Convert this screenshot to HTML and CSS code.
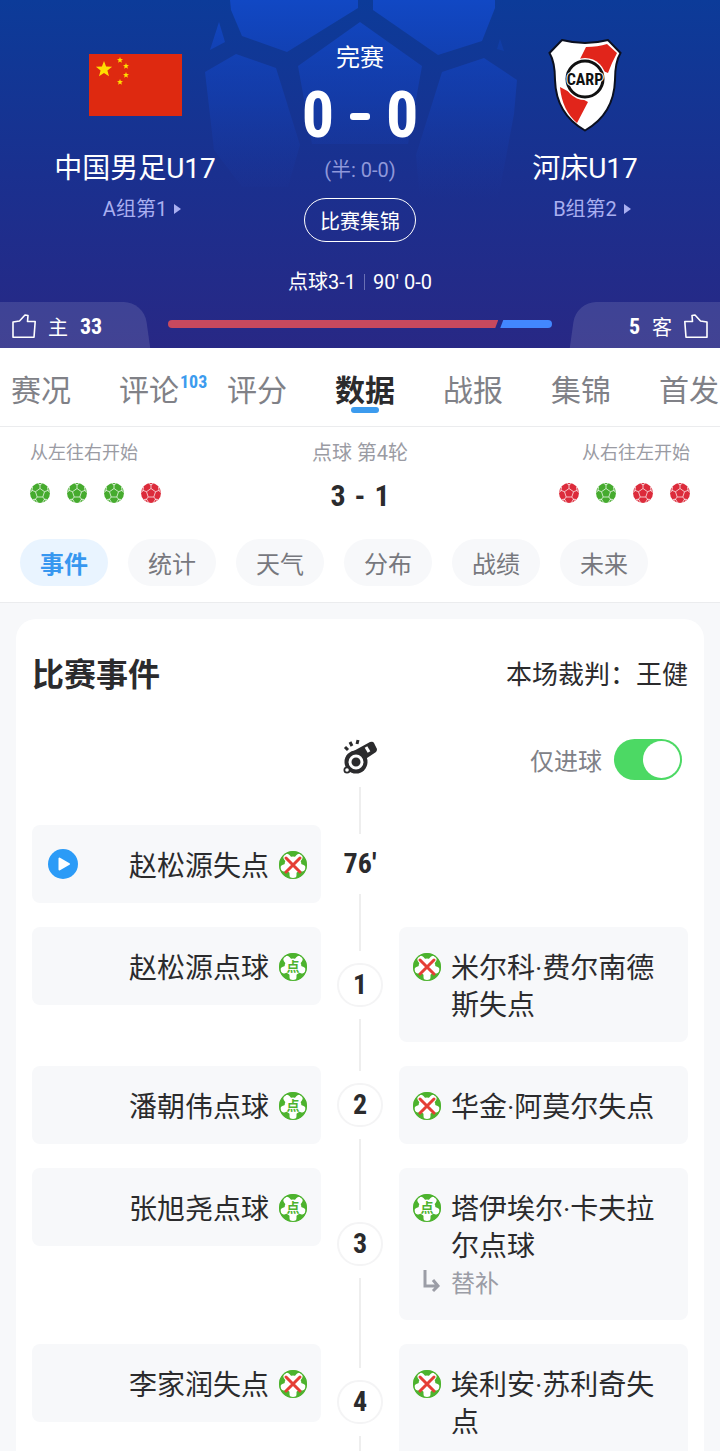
FILE: index.html
```
<!DOCTYPE html>
<html lang="zh-CN">

<head>
    <meta charset="UTF-8" />
    <meta name="viewport" content="width=device-width, initial-scale=1.0" />
    <title>中国男足U17 - 河床U17</title>
    <link rel="stylesheet" href="styles.css">
</head>

<body>
    <!-- shared icons -->
    <svg class="sprite" aria-hidden="true">
        <symbol id="ball" viewBox="0 0 20 20">
            <circle cx="10" cy="10" r="10" fill="currentColor" />
            <g fill="none" stroke="#fff" stroke-opacity=".7">
                <path d="M10 5.500l4.500 3.200-1.700 5.300H7.200L5.500 8.700z" />
                <path d="M10 5.500V1M14.500 8.700l4-1.500M12.800 14l2.700 3.500M7.200 14l-2.700 3.500M5.500 8.700l-4-1.500" />
                <path d="M8 .5l2 1.500 2-1.500M17.500 4l.5 3.500 1.500 2M17 16.500l-2.500-.3-2 3.300M7.500 19.500l-2-3.300-2.500.3M.5 9.500L2 7.500 2.500 4" />
            </g>
        </symbol>
        <symbol id="goal" viewBox="0 0 28 28">
            <circle cx="14" cy="14" r="14" fill="#4db32e" />
            <path d="M14 14L8 6.500M14 14l6-7.500M14 14l9 3M14 14L5 17M14 14v10" stroke="#fff" stroke-width="7" stroke-linecap="round" />
            <circle cx="14" cy="14" r="8.500" fill="#fff" />
            <circle cx="14" cy="14" r="13.500" fill="none" stroke="#4db32e" />
        </symbol>
        <symbol id="scored" viewBox="0 0 28 28">
            <use href="#goal" />
            <text x="14" y="18" text-anchor="middle" font-size="13" font-weight="700" fill="#4db32e">点</text>
        </symbol>
        <symbol id="missed" viewBox="0 0 28 28">
            <use href="#goal" />
            <path d="M7 7l14 14M21 7L7 21" stroke="#e53e35" stroke-width="3" stroke-linecap="round" />
        </symbol>
        <symbol id="thumb" viewBox="0 0 24 24">
            <path d="M1 8l6.500-1L13 1l3 .5L15.500 7.500H23.200L22 23.200H1z" fill="none" stroke="currentColor" stroke-width="1.600" stroke-linejoin="round" />
        </symbol>
    </svg>

    <header class="hero">
        <svg class="hero-ball" viewBox="0 0 340 240" aria-hidden="true">
            <defs>
                <linearGradient id="fade" gradientUnits="userSpaceOnUse" x1="0" y1="0" x2="0" y2="200">
                    <stop offset="0" stop-color="#1148c4" />
                    <stop offset=".5" stop-color="#143fb4" stop-opacity=".6" />
                    <stop offset="1" stop-color="#1a38a0" stop-opacity="0" />
                </linearGradient>
            </defs>
            <g fill="url(#fade)">
                <path d="M40 0h128v8L97 52 52 36 41 10z" />
                <path d="M183 0h122v8l-13 33-44 14L183 10z" />
                <path d="M170 22l62 44-14 78h-96l-14-78z" />
                <path d="M15 72l31-18 40 14 24 77-12 42H52L24 150z" />
                <path d="M252 72l42-14 33 22-3 34-16 86h-78l-4-45z" />
                <path d="M29 22l-9 28 15-8z" />
                <path d="M310 39l4 12-7-2z" opacity=".5" />
            </g>
        </svg>

        <div class="match">
            <div class="team">
                <div class="logo">
                    <svg width="93" height="62" viewBox="0 0 93 62" role="img" aria-label="中国">
                        <path d="M0 0h93v62H0z" fill="#de2910" />
                        <g fill="#ffde00">
                            <path d="M15 7l2.100 5.500 6 .3-4.700 3.800 1.600 5.700-5-3.200-5 3.200 1.600-5.700-4.700-3.800 6-.3z" />
                            <path id="star" d="M31 3l.8 2.100 2.200.1-1.700 1.400.6 2.200-1.900-1.200-1.900 1.200.6-2.200L28 5.200l2.200-.1z" />
                            <use href="#star" x="6" y="6" />
                            <use href="#star" x="6" y="15" />
                            <use href="#star" y="22" />
                        </g>
                    </svg>
                </div>
                <div class="team-name">中国男足U17</div>
                <a class="rank" href="#">A组第1 <svg width="7" height="12" viewBox="0 0 7 12"><path d="M0 1l7 5-7 5z" fill="currentColor" /></svg></a>
            </div>

            <div class="result">
                <div class="status">完赛</div>
                <div class="score"><span>0</span><i></i><span>0</span></div>
                <div class="half">(半: 0-0)</div>
                <button class="highlights">比赛集锦</button>
            </div>

            <div class="team">
                <div class="logo">
                    <svg width="74" height="94" viewBox="0 0 74 94" role="img" aria-label="CARP">
                        <path d="M14 2q23 6 46 0l12.500 13Q67 24 67 42 66 76 37 92.500 8 76 7 42 7 24 1.500 15z" fill="#fff" stroke="#0b1020" stroke-width="2" />
                        <path d="M38 9q12 0 21-3l10 9q-5 9-9 20L31 23zM12 49l28 15-11 21Q14 72 12 49z" fill="#e1251b" />
                        <circle cx="37" cy="41" r="21" fill="#fff" />
                        <circle cx="37" cy="41" r="18" fill="none" stroke="#111" stroke-width="3" />
                        <text class="monogram" x="37" y="47" text-anchor="middle">CARP</text>
                    </svg>
                </div>
                <div class="team-name">河床U17</div>
                <a class="rank" href="#">B组第2 <svg width="7" height="12" viewBox="0 0 7 12"><path d="M0 1l7 5-7 5z" fill="currentColor" /></svg></a>
            </div>
        </div>

        <div class="extra"><span>点球3-1</span><span>90' 0-0</span></div>

        <div class="support">
            <button class="vote home">
                <svg width="24" height="24"><use href="#thumb" /></svg>
                <span>主</span><b>33</b>
            </button>
            <div class="ratio">
                <div class="ratio-home" style="width: 86%"></div>
                <div class="ratio-away"></div>
            </div>
            <button class="vote away">
                <b>5</b><span>客</span>
                <svg class="flip" width="24" height="24"><use href="#thumb" /></svg>
            </button>
        </div>
    </header>

    <nav class="tabs">
        <a href="#">赛况</a>
        <a href="#">评论<sup>103</sup></a>
        <a href="#">评分</a>
        <a href="#" class="active">数据</a>
        <a href="#">战报</a>
        <a href="#">集锦</a>
        <a href="#">首发</a>
    </nav>

    <section class="shootout">
        <div class="side">
            <div class="side-label">从左往右开始</div>
            <div class="balls">
                <svg class="in"><use href="#ball" /></svg>
                <svg class="in"><use href="#ball" /></svg>
                <svg class="in"><use href="#ball" /></svg>
                <svg class="out"><use href="#ball" /></svg>
            </div>
        </div>
        <div class="round">
            <div class="round-label">点球 第4轮</div>
            <div class="round-score"><span>3</span><span>-</span><span>1</span></div>
        </div>
        <div class="side right">
            <div class="side-label">从右往左开始</div>
            <div class="balls">
                <svg class="out"><use href="#ball" /></svg>
                <svg class="in"><use href="#ball" /></svg>
                <svg class="out"><use href="#ball" /></svg>
                <svg class="out"><use href="#ball" /></svg>
            </div>
        </div>
    </section>

    <div class="chips">
        <button class="chip active">事件</button>
        <button class="chip">统计</button>
        <button class="chip">天气</button>
        <button class="chip">分布</button>
        <button class="chip">战绩</button>
        <button class="chip">未来</button>
    </div>

    <main class="content">
        <div class="card">
            <div class="card-head">
                <h2>比赛事件</h2>
                <span>本场裁判：王健</span>
            </div>

            <div class="start">
                <div class="axis">
                    <svg width="34" height="36" viewBox="0 0 34 36" aria-hidden="true">
                        <g fill="#2b2b2d">
                            <path d="M7 14L27 3q3-1 4 1l3 6q0 2-1 3l-9 6-2 6z" />
                            <circle cx="13" cy="23" r="11.500" />
                            <circle cx="4" cy="31" r="3.500" />
                        </g>
                        <circle cx="13" cy="23" r="6" fill="none" stroke="#fff" stroke-width="3" />
                        <circle cx="4" cy="31" r="1.800" fill="#fff" />
                        <path d="M23 8l3 5" stroke="#fff" stroke-width="3" />
                        <path d="M2 8l3 3M7 3l2 4M15 1l-1 4" stroke="#2b2b2d" stroke-width="3" />
                    </svg>
                </div>
                <label class="only-goals">仅进球 <input type="checkbox" checked></label>
            </div>

            <div class="row">
                <div class="event home-event">
                    <button class="play" aria-label="播放"><svg width="30" height="30" viewBox="0 0 30 30"><circle cx="15" cy="15" r="15" fill="#2b9bf7" /><path d="M11.500 9.500v11L21 15z" fill="#fff" stroke="#fff" stroke-width="2" stroke-linejoin="round" /></svg></button>
                    <p>赵松源失点</p>
                    <svg class="mark"><use href="#missed" /></svg>
                </div>
                <div class="axis"><span class="minute">76′</span></div>
            </div>

            <div class="row">
                <div class="event home-event">
                    <p>赵松源点球</p>
                    <svg class="mark"><use href="#scored" /></svg>
                </div>
                <div class="axis"><span class="node">1</span></div>
                <div class="event">
                    <svg class="mark"><use href="#missed" /></svg>
                    <p>米尔科·费尔南德斯失点</p>
                </div>
            </div>

            <div class="row">
                <div class="event home-event">
                    <p>潘朝伟点球</p>
                    <svg class="mark"><use href="#scored" /></svg>
                </div>
                <div class="axis"><span class="node">2</span></div>
                <div class="event">
                    <svg class="mark"><use href="#missed" /></svg>
                    <p>华金·阿莫尔失点</p>
                </div>
            </div>

            <div class="row">
                <div class="event home-event">
                    <p>张旭尧点球</p>
                    <svg class="mark"><use href="#scored" /></svg>
                </div>
                <div class="axis"><span class="node">3</span></div>
                <div class="event">
                    <svg class="mark"><use href="#scored" /></svg>
                    <p>塔伊埃尔·卡夫拉尔点球</p>
                    <svg class="arrow" viewBox="0 0 18 24"><path d="M2 1v16h13M10 11l5 6-5 5" fill="none" stroke="#9b9da6" stroke-width="3" /></svg>
                    <p class="sub">替补</p>
                </div>
            </div>

            <div class="row">
                <div class="event home-event">
                    <p>李家润失点</p>
                    <svg class="mark"><use href="#missed" /></svg>
                </div>
                <div class="axis"><span class="node">4</span></div>
                <div class="event">
                    <svg class="mark"><use href="#missed" /></svg>
                    <p>埃利安·苏利奇失点</p>
                </div>
            </div>
        </div>
    </main>
</body>

</html>
```
FILE: styles.css
```
* {
    box-sizing: border-box;
}

body {
    margin: 0;
    height: 100vh;
    display: flex;
    flex-direction: column;
    overflow: hidden;
    font-family: Roboto, "Noto Sans CJK SC", sans-serif;
    color: #2b2b2d;
    background: #fff;
}

button {
    font-family: inherit;
    border: none;
    padding: 0;
    background: none;
    cursor: pointer;
}

a {
    color: inherit;
    text-decoration: none;
}

svg {
    display: block;
    flex: none;
}

p,
h2 {
    margin: 0;
}

.sprite {
    display: none;
}

/* hero */
.hero {
    position: relative;
    flex: none;
    overflow: hidden;
    color: #fff;
    background: linear-gradient(#0c3b99, #1a308f 50%, #282885);
}

.hero-ball {
    position: absolute;
    top: 0;
    left: 50%;
    width: 340px;
    margin-left: -170px;
}

.match {
    position: relative;
    display: grid;
    grid-template-columns: 3fr 2fr 3fr;
    padding-top: 38px;
}

.team,
.result {
    display: flex;
    flex-direction: column;
    align-items: center;
}

.logo {
    height: 94px;
    display: flex;
    align-items: center;
}

.monogram {
    font-family: "Roboto Condensed", "Liberation Sans Narrow", Roboto, sans-serif;
    font-size: 16px;
    font-weight: 700;
    fill: #111;
    stroke: #fff;
    stroke-width: 2px;
    paint-order: stroke;
}

.team-name {
    margin-top: 17px;
    font-size: 28px;
    line-height: 40px;
}

.rank {
    display: flex;
    align-items: center;
    gap: 7px;
    margin-top: 6px;
    padding-left: 14px;
    font-size: 20px;
    line-height: 28px;
    color: #a9aff0;
}

.status {
    padding-top: 2px;
    font-size: 24px;
    line-height: 36px;
}

.score {
    display: flex;
    align-items: center;
    gap: 16px;
    margin-top: 8px;
    font-family: "Roboto Condensed", "Liberation Sans Narrow", Roboto, sans-serif;
    font-size: 64px;
    font-weight: 700;
    line-height: 64px;
}

.score i {
    width: 20px;
    height: 7px;
    border-radius: 3px;
    background: #fff;
}

.half {
    margin-top: 8px;
    font-size: 20px;
    line-height: 28px;
    color: #8f98da;
}

.highlights {
    width: 112px;
    height: 44px;
    margin-top: 14px;
    border: 1px solid #fff;
    border-radius: 22px;
    font-size: 20px;
    color: #fff;
}

.extra {
    position: relative;
    display: flex;
    justify-content: center;
    align-items: center;
    margin-top: 26px;
    font-size: 20px;
    line-height: 28px;
}

.extra span + span {
    margin-left: 8px;
    padding-left: 8px;
    border-left: 1px solid #6a70b4;
    line-height: 16px;
}

.support {
    position: relative;
    display: grid;
    grid-template-columns: 168px 1fr 168px;
    height: 46px;
    margin-top: 6px;
}

.vote {
    position: relative;
    display: flex;
    align-items: center;
    gap: 12px;
    padding: 2px 12px 0;
    font-size: 20px;
    color: #fff;
}

.vote::before {
    content: "";
    position: absolute;
    top: 0;
    bottom: 0;
    left: -20px;
    right: 21px;
    border-radius: 0 20px 0 0;
    background: rgba(255, 255, 255, .12);
    transform: skewX(8deg);
}

.vote.away::before {
    left: 21px;
    right: -20px;
    border-radius: 20px 0 0 0;
    transform: skewX(-8deg);
}

.away {
    justify-content: flex-end;
}

.vote b {
    font-family: "Roboto Condensed", "Liberation Sans Narrow", Roboto, sans-serif;
    font-size: 22px;
}

.flip {
    transform: scaleX(-1);
}

.ratio {
    display: flex;
    gap: 2px;
    height: 8px;
    margin-top: 18px;
}

.ratio-home {
    border-radius: 4px 0 0 4px;
    background: #c8495e;
    clip-path: polygon(0 0, 100% 0, calc(100% - 3px) 100%, 0 100%);
}

.ratio-away {
    flex: 1;
    border-radius: 0 4px 4px 0;
    background: #4287ff;
    clip-path: polygon(3px 0, 100% 0, 100% 100%, 0 100%);
}

/* tabs */
.tabs {
    flex: none;
    display: flex;
    gap: 48px;
    height: 79px;
    padding-left: 11px;
    overflow: hidden;
    border-bottom: 1px solid #ebecee;
}

.tabs a {
    position: relative;
    flex: none;
    font-size: 30px;
    line-height: 86px;
    color: #808187;
}

.tabs .active {
    font-weight: 700;
    color: #2b2b2d;
}

.tabs .active::after {
    content: "";
    position: absolute;
    left: 16px;
    right: 16px;
    top: 59px;
    height: 6px;
    border-radius: 3px;
    background: #3c9bee;
}

.tabs sup {
    position: absolute;
    left: 61px;
    top: 22px;
    font-family: "Roboto Condensed", "Liberation Sans Narrow", Roboto, sans-serif;
    font-size: 18px;
    font-weight: 700;
    line-height: 24px;
    color: #3c9bee;
}

/* penalty shootout */
.shootout {
    flex: none;
    display: flex;
    justify-content: space-between;
    padding: 12px 30px 0;
    height: 112px;
}

.side,
.round {
    display: flex;
    flex-direction: column;
    gap: 16px;
    color: #9a9ba3;
}

.round {
    align-items: center;
    gap: 13px;
}

.right {
    align-items: flex-end;
}

.side-label {
    font-size: 18px;
    line-height: 28px;
}

.round-label {
    font-size: 20px;
    line-height: 28px;
}

.round-score {
    display: flex;
    gap: 9px;
    font-family: "Roboto Condensed", "Liberation Sans Narrow", Roboto, sans-serif;
    font-size: 30px;
    font-weight: 700;
    line-height: 32px;
    color: #2b2b2d;
}

.balls {
    display: flex;
    gap: 17px;
}

.balls svg {
    width: 20px;
    height: 20px;
}

.in {
    color: #46ab2e;
}

.out {
    color: #dc2b3b;
}

.chips {
    flex: none;
    display: flex;
    gap: 20px;
    padding: 0 20px 16px;
    border-bottom: 1px solid #ebecee;
}

.chip {
    width: 88px;
    height: 47px;
    border-radius: 24px;
    font-size: 24px;
    color: #77787e;
    background: #f7f8fa;
}

.chip.active {
    font-weight: 700;
    color: #3797f0;
    background: #e9f4ff;
}

/* events */
.content {
    flex: 1;
    min-height: 0;
    overflow: hidden;
    padding: 16px;
    background: #f7f8fa;
}

.card {
    padding: 32px 16px;
    border-radius: 20px;
    background: #fff;
}

.card-head {
    display: flex;
    justify-content: space-between;
    align-items: center;
    padding-top: 1px;
    line-height: 46px;
    font-size: 26px;
}

.card-head h2 {
    font-size: 32px;
}

.start,
.row {
    display: grid;
    grid-template-columns: 1fr 78px 1fr;
    align-items: start;
}

.start {
    height: 115px;
    padding-top: 41px;
}

.axis {
    grid-column: 2;
    align-self: stretch;
    display: flex;
    flex-direction: column;
    align-items: center;
    gap: 12px;
}

.axis::after,
.row .axis::before {
    content: "";
    flex: 1;
    width: 2px;
    background: #eee;
}

.only-goals {
    display: flex;
    justify-content: flex-end;
    align-items: center;
    gap: 12px;
    padding-right: 6px;
    font-size: 24px;
    color: #808187;
}

.only-goals input {
    appearance: none;
    width: 68px;
    height: 41px;
    margin: 0;
    border-radius: 21px;
    background: #dcdde0;
}

.only-goals input::before {
    content: "";
    display: block;
    width: 37px;
    height: 37px;
    margin: 2px;
    border-radius: 50%;
    background: #fff;
}

.only-goals input:checked {
    background: #4cd964;
}

.only-goals input:checked::before {
    margin-left: 29px;
}

.event {
    display: grid;
    grid-template-columns: 28px 1fr;
    column-gap: 10px;
    margin: 12px 0;
    padding: 23px 24px 18px 14px;
    border-radius: 8px;
    font-size: 28px;
    line-height: 37px;
    background: #f7f8fa;
}

.home-event {
    display: flex;
    justify-content: flex-end;
    gap: 10px;
    padding: 23px 14px 18px 16px;
}

.mark {
    width: 28px;
    height: 28px;
    margin-top: 3px;
}

.play {
    margin: 1px auto 0 0;
    height: 30px;
}

.arrow {
    width: 18px;
    height: 24px;
    margin: 4px 0 0 10px;
}

.sub {
    padding-top: 2px;
    font-size: 24px;
    line-height: 35px;
    color: #9b9da6;
}

.minute,
.node {
    font-family: "Roboto Condensed", "Liberation Sans Narrow", Roboto, sans-serif;
    font-size: 28px;
    font-weight: 700;
    line-height: 36px;
}

.node {
    padding: 2px 14px;
    border: 2px solid #f4f4f5;
    border-radius: 22px;
}
```
